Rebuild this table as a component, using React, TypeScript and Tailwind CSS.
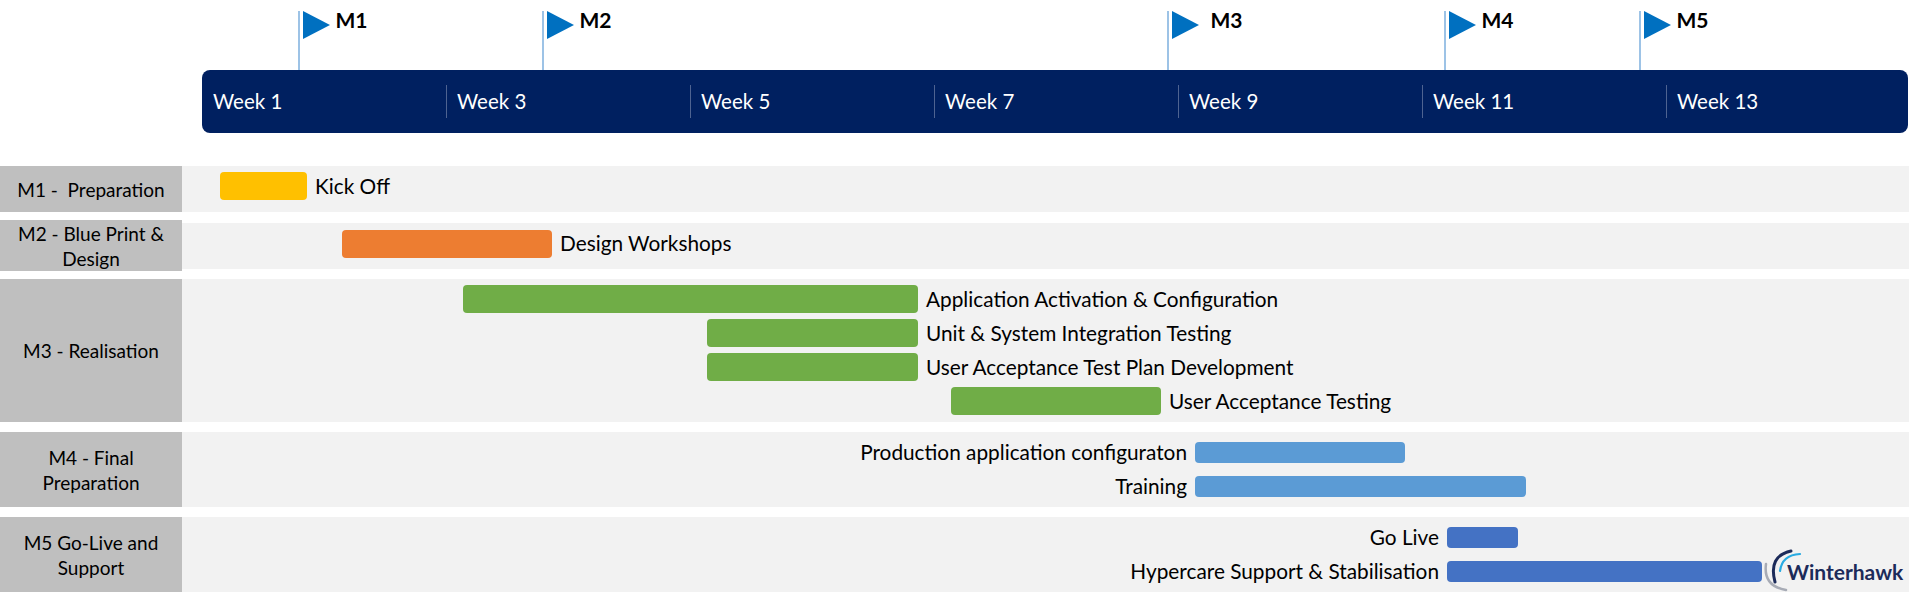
import React from "react";

type Task = {
  start: number;
  end: number;
  color: string;
  text: string;
  side: "left" | "right";
  logo?: boolean;
};

type Phase = {
  label: string;
  rowClass: string;
  bandClass: string;
  lineClass: string;
  tasks: Task[];
};

const BAND_LEFT = 182;

const milestones = [
  { name: "M1", x: 298, gap: 6 },
  { name: "M2", x: 542, gap: 6 },
  { name: "M3", x: 1167, gap: 12 },
  { name: "M4", x: 1444, gap: 6 },
  { name: "M5", x: 1639, gap: 6 },
];

const weeks = [1, 3, 5, 7, 9, 11, 13];

const phases: Phase[] = [
  {
    label: "M1 -  Preparation",
    rowClass: "h-[46px]",
    bandClass: "h-[46px] pt-[6px]",
    lineClass: "h-[28px]",
    tasks: [{ start: 220, end: 307, color: "bg-[#ffc000]", text: "Kick Off", side: "right" }],
  },
  {
    label: "M2 - Blue Print & Design",
    rowClass: "mt-[8px] h-[51px]",
    bandClass: "h-[46px] pt-[7px]",
    lineClass: "h-[28px]",
    tasks: [{ start: 342, end: 552, color: "bg-[#ed7d31]", text: "Design Workshops", side: "right" }],
  },
  {
    label: "M3 - Realisation",
    rowClass: "mt-[8px] h-[143px]",
    bandClass: "h-full pt-[6px] gap-[6px]",
    lineClass: "h-[28px]",
    tasks: [
      { start: 463, end: 918, color: "bg-[#70ad47]", text: "Application Activation & Configuration", side: "right" },
      { start: 707, end: 918, color: "bg-[#70ad47]", text: "Unit & System Integration Testing", side: "right" },
      { start: 707, end: 918, color: "bg-[#70ad47]", text: "User Acceptance Test Plan Development", side: "right" },
      { start: 951, end: 1161, color: "bg-[#70ad47]", text: "User Acceptance Testing", side: "right" },
    ],
  },
  {
    label: "M4 - Final Preparation",
    rowClass: "mt-[10px] h-[75px]",
    bandClass: "h-full pt-[10px] gap-[13px]",
    lineClass: "h-[21px]",
    tasks: [
      { start: 1195, end: 1405, color: "bg-[#5b9bd5]", text: "Production application configuraton", side: "left" },
      { start: 1195, end: 1526, color: "bg-[#5b9bd5]", text: "Training", side: "left" },
    ],
  },
  {
    label: "M5 Go-Live and Support",
    rowClass: "mt-[10px] h-[75px]",
    bandClass: "h-full pt-[10px] gap-[13px]",
    lineClass: "h-[21px]",
    tasks: [
      { start: 1447, end: 1518, color: "bg-[#4472c4]", text: "Go Live", side: "left" },
      { start: 1447, end: 1762, color: "bg-[#4472c4]", text: "Hypercare Support & Stabilisation", side: "left", logo: true },
    ],
  },
];

const Logo = () => (
  <div className="relative ml-[2px] flex h-[40px] w-[142px] shrink-0 items-center">
    <svg className="absolute left-0 top-[-3px]" width="44" height="44" viewBox="0 0 44 44" fill="none">
      <path d="M2 15 Q -1 37 22 41" stroke="#a7abb5" strokeWidth="2.5" strokeLinecap="round" />
      <path d="M27 2 Q 4 7 11 33" stroke="#1c2b5a" strokeWidth="3" strokeLinecap="round" />
      <path d="M36 5 Q 18 6 16 22" stroke="#29abe2" strokeWidth="2.2" strokeLinecap="round" />
    </svg>
    <span className="relative ml-[23px] text-[21px] font-bold leading-none text-[#1c2b5a]">Winterhawk</span>
  </div>
);

const TaskLine = ({ task, lineClass }: { task: Task; lineClass: string }) => {
  const offset = task.start - BAND_LEFT;
  const width = task.end - task.start;

  if (task.side === "right") {
    return (
      <div className={`flex items-center ${lineClass}`}>
        <div className="shrink-0" style={{ width: offset }} />
        <div className={`h-full shrink-0 rounded-[4px] ${task.color}`} style={{ width }} />
        <span className="ml-[8px] whitespace-nowrap text-[20.8px] leading-none">{task.text}</span>
      </div>
    );
  }

  return (
    <div className={`flex items-center ${lineClass}`}>
      <div className="flex shrink-0 justify-end" style={{ width: offset - 8 }}>
        <span className="whitespace-nowrap text-[20.8px] leading-none">{task.text}</span>
      </div>
      <div className={`ml-[8px] h-full shrink-0 rounded-[4px] ${task.color}`} style={{ width }} />
      {task.logo && <Logo />}
    </div>
  );
};

export default function App() {
  return (
    <div className="h-[599px] w-[1911px] overflow-hidden bg-white font-['Lato',sans-serif] text-black">
      {/* milestone flags */}
      <div className="relative h-[70px] w-[1909px]">
        {milestones.map((m) => (
          <div key={m.name} className="absolute top-[11px] flex h-[59px]" style={{ left: m.x }}>
            <div className="h-full w-[1.5px] bg-[#9dc3e6]" />
            <svg className="ml-[3px]" width="27" height="28" viewBox="0 0 27 28">
              <polygon points="0,0 27,14 0,28" fill="#0070c0" />
            </svg>
            <span className="mt-[-2px] text-[21px] font-bold leading-none" style={{ marginLeft: m.gap }}>
              {m.name}
            </span>
          </div>
        ))}
      </div>

      {/* week scale */}
      <div className="ml-[202px] flex h-[63px] w-[1706px] rounded-[8px] bg-[#002060]">
        {weeks.map((w, i) => (
          <div key={w} className="flex w-[244px] shrink-0 items-center last:w-auto last:flex-1">
            <div className={i === 0 ? "h-[33px] w-px" : "h-[33px] w-px bg-[#4e6391]"} />
            <span className="ml-[10px] text-[20.5px] leading-none text-white">Week {w}</span>
          </div>
        ))}
      </div>

      {/* phases */}
      <div className="mt-[33px] flex w-[1909px] flex-col">
        {phases.map((p) => (
          <div key={p.label} className={`flex items-center ${p.rowClass}`}>
            <div className="flex h-full w-[182px] shrink-0 items-center justify-center whitespace-pre-wrap bg-[#bfbfbf] px-2 text-center text-[19px] leading-[25px]">
              {p.label}
            </div>
            <div className={`flex flex-1 flex-col bg-[#f2f2f2] ${p.bandClass}`}>
              {p.tasks.map((t) => (
                <TaskLine key={t.text} task={t} lineClass={p.lineClass} />
              ))}
            </div>
          </div>
        ))}
      </div>
    </div>
  );
}
